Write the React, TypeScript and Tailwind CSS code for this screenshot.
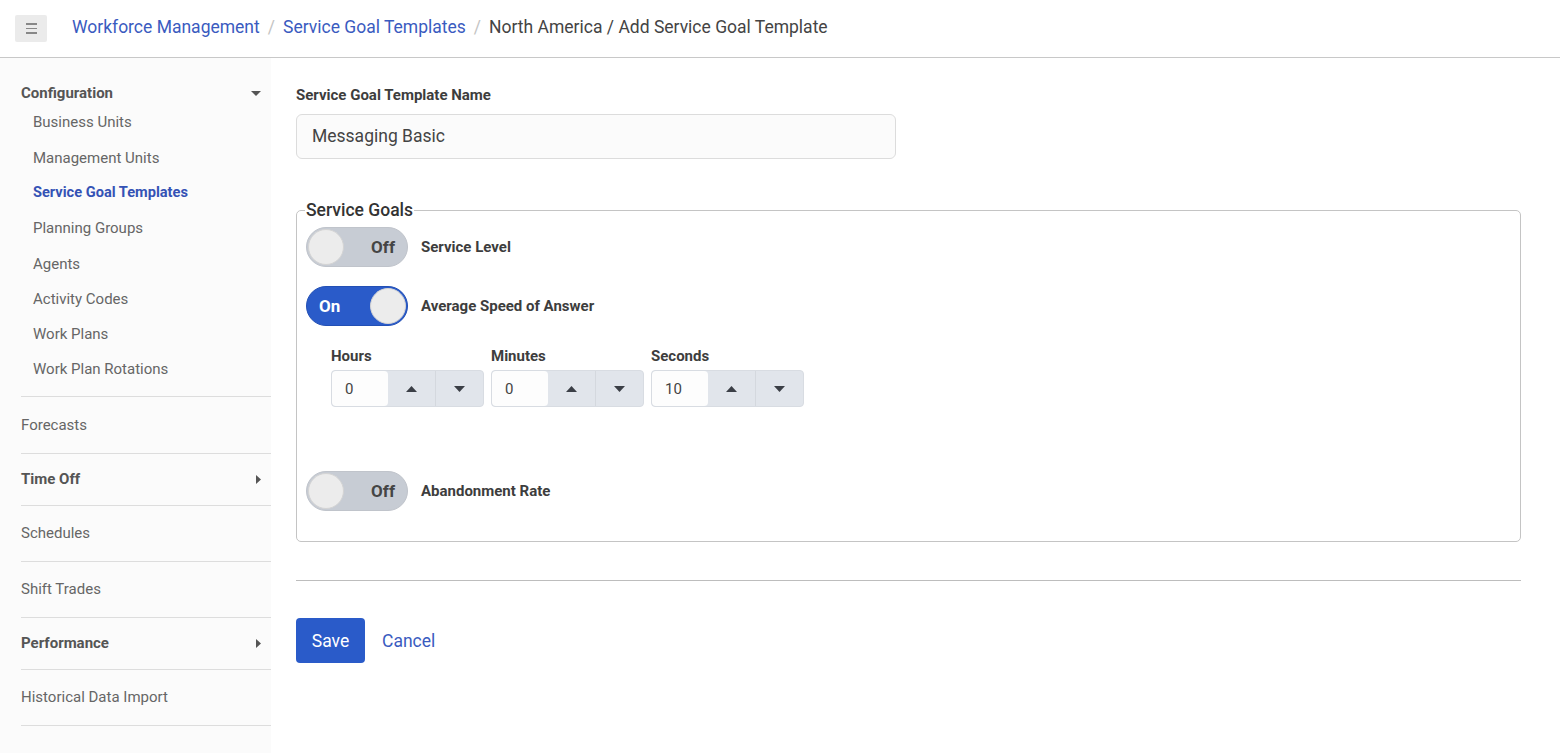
const sideItems = [
    "Business Units",
    "Management Units",
    "Service Goal Templates",
    "Planning Groups",
    "Agents",
    "Activity Codes",
    "Work Plans",
    "Work Plan Rotations",
];

const sections: { label: string; bold?: boolean; arrow?: boolean }[] = [
    { label: "Forecasts" },
    { label: "Time Off", bold: true, arrow: true },
    { label: "Schedules" },
    { label: "Shift Trades" },
    { label: "Performance", bold: true, arrow: true },
    { label: "Historical Data Import" },
];

const Toggle: React.FC<{ on?: boolean }> = ({ on }) => {
    if (on) {
        return (
            <div className="w-[102px] h-[40px] rounded-full bg-[#2a5bc9] border border-[#2350b5] flex items-center justify-between pl-[12px] pr-[1px]">
                <span className="text-white text-[17px] font-bold">On</span>
                <span className="w-[36px] h-[36px] rounded-full bg-[#ececec] border border-[#d4d4d4]" />
            </div>
        );
    }
    return (
        <div className="w-[102px] h-[40px] rounded-full bg-[#c7ccd4] border border-[#c0c4cb] flex items-center justify-between pl-[1px] pr-[12px]">
            <span className="w-[36px] h-[36px] rounded-full bg-[#ececec] border border-[#d4d4d4]" />
            <span className="text-[#454545] text-[17px] font-bold">Off</span>
        </div>
    );
};

const Spinner: React.FC<{ label: string; value: string }> = ({ label, value }) => (
    <div className="flex flex-col">
        <label className="text-[15px] font-bold text-[#3d3d3d] mb-[5px] leading-[17px]">{label}</label>
        <div className="w-[153px] h-[37px] rounded-[4px] bg-[#e1e5eb] border border-[#d8dce2] flex overflow-hidden">
            <div className="w-[56px] h-full bg-[#fdfdfd] rounded-[4px] flex items-center pl-[13px] text-[15px] text-[#444]">
                {value}
            </div>
            <div className="w-[48px] h-full flex items-center justify-center border-r border-[#d4d8de]">
                <svg width="11" height="6" viewBox="0 0 11 6"><path d="M0 6 L5.5 0 L11 6 Z" fill="#3b3f46" /></svg>
            </div>
            <div className="flex-1 h-full flex items-center justify-center">
                <svg width="11" height="6" viewBox="0 0 11 6"><path d="M0 0 L11 0 L5.5 6 Z" fill="#3b3f46" /></svg>
            </div>
        </div>
    </div>
);

const Caret: React.FC<{ dir: "down" | "right" }> = ({ dir }) =>
    dir === "down" ? (
        <svg width="10" height="5" viewBox="0 0 10 5"><path d="M0 0 L10 0 L5 5 Z" fill="#555" /></svg>
    ) : (
        <svg width="5" height="9" viewBox="0 0 5 9"><path d="M0 0 L5 4.5 L0 9 Z" fill="#555" /></svg>
    );

export default function App() {
    return (
        <div className="w-[1560px] h-[753px] bg-white flex flex-col overflow-hidden" style={{ fontFamily: "Roboto, 'Liberation Sans', sans-serif" }}>
            {/* header */}
            <header className="h-[58px] border-b border-[#c8c8c8] flex items-center pl-[15px] shrink-0">
                <button className="w-[32px] h-[27px] bg-[#ebebeb] rounded-[2px] flex flex-col items-center justify-center gap-[3px]">
                    <span className="block w-[11px] h-[1.5px] bg-[#888]" />
                    <span className="block w-[11px] h-[1.5px] bg-[#888]" />
                    <span className="block w-[11px] h-[1.5px] bg-[#888]" />
                </button>
                <nav className="ml-[25px] flex items-center text-[17.5px] mb-[2px]">
                    <a className="text-[#3a5bbf]">Workforce Management</a>
                    <span className="text-[#c4c4c4] mx-[8px]">/</span>
                    <a className="text-[#3a5bbf]">Service Goal Templates</a>
                    <span className="text-[#c4c4c4] mx-[8px]">/</span>
                    <span className="text-[#444]">North America / Add Service Goal Template</span>
                </nav>
            </header>

            <div className="flex flex-1">
                {/* sidebar */}
                <aside className="w-[271px] bg-[#fbfbfb] shrink-0 pl-[21px] pt-[26px]">
                    <div className="flex items-center justify-between pr-[10px] h-[18px]">
                        <span className="text-[15px] font-bold text-[#555]">Configuration</span>
                        <Caret dir="down" />
                    </div>
                    <ul className="pl-[12px] mt-[3px]">
                        {sideItems.map((it) => (
                            <li
                                key={it}
                                className={`h-[35.3px] flex items-center ${
                                    it === "Service Goal Templates" ? "font-bold text-[#3452b5] text-[14.6px]" : "text-[15px] text-[#666]"
                                }`}
                            >
                                {it}
                            </li>
                        ))}
                    </ul>
                    <div className="border-b border-[#ddd] mt-[9px]" />
                    {sections.map((s) => (
                        <div
                            key={s.label}
                            className={`border-b border-[#ddd] flex items-center justify-between pr-[10px] ${s.bold ? "h-[52px]" : "h-[56.2px]"}`}
                        >
                            <span className={s.bold ? "text-[15px] font-bold text-[#555]" : "text-[15px] text-[#666]"}>{s.label}</span>
                            {s.arrow && <Caret dir="right" />}
                        </div>
                    ))}
                </aside>

                {/* main */}
                <main className="flex-1 pl-[25px] pr-[39px] pt-[28px]">
                    <label className="block text-[15px] font-bold text-[#3d3d3d] leading-[18px]">Service Goal Template Name</label>
                    <div className="mt-[10px] w-[600px] h-[45px] rounded-[6px] border border-[#dcdcdc] bg-[#fbfbfb] flex items-center pl-[15px] text-[17.5px] text-[#444]">
                        Messaging Basic
                    </div>

                    <fieldset className="mt-[38px] border border-[#c4c4c4] rounded-[5px] px-[9px] h-[345px]">
                        <legend className="text-[17.5px] font-medium text-[#333] px-[1px] -ml-[1px]">Service Goals</legend>
                        <div className="flex items-center gap-[13px] mt-[4px]">
                            <Toggle />
                            <span className="text-[15px] font-bold text-[#3d3d3d]">Service Level</span>
                        </div>
                        <div className="flex items-center gap-[13px] mt-[19px]">
                            <Toggle on />
                            <span className="text-[15px] font-bold text-[#3d3d3d]">Average Speed of Answer</span>
                        </div>
                        <div className="flex gap-[7px] ml-[25px] mt-[22px]">
                            <Spinner label="Hours" value="0" />
                            <Spinner label="Minutes" value="0" />
                            <Spinner label="Seconds" value="10" />
                        </div>
                        <div className="flex items-center gap-[13px] mt-[64px]">
                            <Toggle />
                            <span className="text-[15px] font-bold text-[#3d3d3d]">Abandonment Rate</span>
                        </div>
                    </fieldset>

                    <div className="border-b border-[#bdbdbd] mt-[38px]" />

                    <div className="flex items-center mt-[37px] gap-[17px]">
                        <button className="w-[69px] h-[45px] bg-[#2a5bc9] rounded-[4px] text-white text-[17.5px] pt-[2px]">Save</button>
                        <a className="text-[#3a5bbf] text-[17.5px] pt-[2px]">Cancel</a>
                    </div>
                </main>
            </div>
        </div>
    );
}
